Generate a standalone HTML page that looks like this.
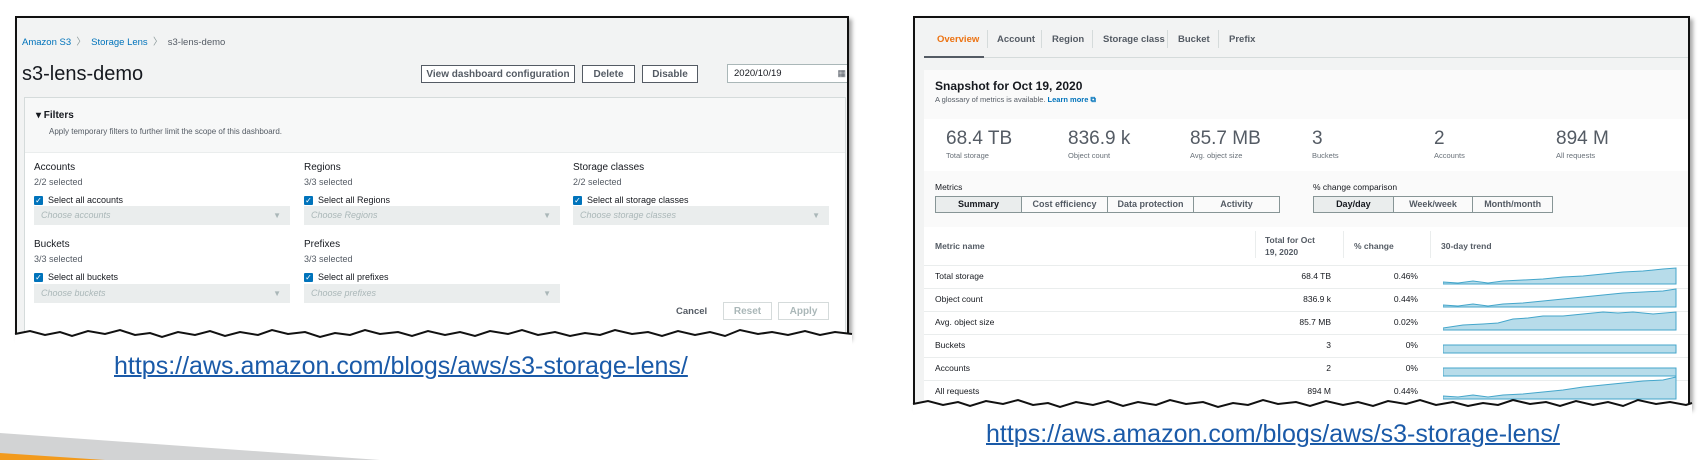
<!DOCTYPE html>
<html><head><meta charset="utf-8"><style>
*{box-sizing:border-box;margin:0;padding:0}
body{width:1708px;height:460px;background:#fff;position:relative;overflow:hidden;font-family:"Liberation Sans",sans-serif;color:#16191f}
.abs{position:absolute;white-space:nowrap}
.panel{position:absolute;border:2px solid #111;border-bottom:none;overflow:hidden;box-shadow:3px 3px 4px rgba(0,0,0,.35)}
.btn{position:absolute;border:1px solid #545b64;background:#fff;font-size:10px;font-weight:bold;color:#545b64;display:flex;align-items:center;justify-content:center}
.sel{position:absolute;height:19px;background:#eaeded;font-size:9px;font-style:italic;color:#aab7b8;padding-left:7px;line-height:19px}
.sel:after{content:"▼";position:absolute;right:9px;top:0;font-style:normal;font-size:8px;color:#aab7b8}
.cb{position:absolute;width:9px;height:9px;background:#0073bb;border-radius:1px;color:#fff;font-size:8px;line-height:9px;text-align:center}
.s9{font-size:9px;color:#16191f}
.link{position:absolute;font-family:"Liberation Sans Narrow","Liberation Sans",sans-serif;font-size:25px;color:#1a5aa8;text-decoration:underline;text-decoration-thickness:2px;white-space:nowrap}
.seg{position:absolute;height:17px;border:1px solid #879596;display:flex;font-size:9px;font-weight:bold;color:#545b64}
.seg div{flex:1;text-align:center;line-height:15px;border-left:1px solid #879596}
.seg div:first-child{border-left:none;background:#eaeded;color:#16191f}
.row{position:absolute;left:924px;width:764px;height:23px;border-top:1px solid #eaeded;font-size:9px}
</style></head><body>

<!-- LEFT PANEL -->
<div class="panel" style="left:15px;top:16px;width:834px;height:322px;background:#f2f3f3">
  <div class="abs" style="left:5px;top:16px;font-size:9.5px;color:#0073bb">Amazon S3 <span style="color:#879596">&nbsp;〉&nbsp;</span> Storage Lens <span style="color:#879596">&nbsp;〉&nbsp;</span> <span style="color:#545b64">s3-lens-demo</span></div>
  <div class="abs" style="left:5px;top:45px;font-size:20px;color:#16191f">s3-lens-demo</div>
  <div class="btn" style="left:404px;top:47px;width:154px;height:18px">View dashboard configuration</div>
  <div class="btn" style="left:565px;top:47px;width:53px;height:18px">Delete</div>
  <div class="btn" style="left:625px;top:47px;width:56px;height:18px">Disable</div>
  <div class="abs" style="left:710px;top:46px;width:124px;height:19px;border:1px solid #aab7b8;background:#fff;font-size:9.5px;padding-left:6px;line-height:17px">2020/10/19<span style="position:absolute;right:4px;top:0;font-size:9px;color:#545b64">▦</span></div>
  <div style="position:absolute;left:7px;top:79px;width:822px;height:250px;background:#fff;border:1px solid #d5dbdb">
    <div style="position:absolute;left:0;top:0;width:100%;height:55px;background:#f7f8f8;border-bottom:1px solid #eaeded"></div>
    <div class="abs" style="left:11px;top:12px;font-size:10px;font-weight:bold">▾ Filters</div>
    <div class="abs" style="left:24px;top:29px;font-size:8px;color:#545b64">Apply temporary filters to further limit the scope of this dashboard.</div>
  </div>
</div>
<div class="abs s9" style="left:34px;top:162px;font-size:10px">Accounts</div>
<div class="abs s9" style="left:34px;top:177px;color:#545b64">2/2 selected</div>
<div class="cb" style="left:34px;top:196px">✓</div><div class="abs s9" style="left:48px;top:195px">Select all accounts</div>
<div class="sel" style="left:34px;top:206px;width:256px">Choose accounts</div>

<div class="abs s9" style="left:304px;top:162px;font-size:10px">Regions</div>
<div class="abs s9" style="left:304px;top:177px;color:#545b64">3/3 selected</div>
<div class="cb" style="left:304px;top:196px">✓</div><div class="abs s9" style="left:318px;top:195px">Select all Regions</div>
<div class="sel" style="left:304px;top:206px;width:256px">Choose Regions</div>

<div class="abs s9" style="left:573px;top:162px;font-size:10px">Storage classes</div>
<div class="abs s9" style="left:573px;top:177px;color:#545b64">2/2 selected</div>
<div class="cb" style="left:573px;top:196px">✓</div><div class="abs s9" style="left:587px;top:195px">Select all storage classes</div>
<div class="sel" style="left:573px;top:206px;width:256px">Choose storage classes</div>

<div class="abs s9" style="left:34px;top:239px;font-size:10px">Buckets</div>
<div class="abs s9" style="left:34px;top:254px;color:#545b64">3/3 selected</div>
<div class="cb" style="left:34px;top:273px">✓</div><div class="abs s9" style="left:48px;top:272px">Select all buckets</div>
<div class="sel" style="left:34px;top:284px;width:256px">Choose buckets</div>

<div class="abs s9" style="left:304px;top:239px;font-size:10px">Prefixes</div>
<div class="abs s9" style="left:304px;top:254px;color:#545b64">3/3 selected</div>
<div class="cb" style="left:304px;top:273px">✓</div><div class="abs s9" style="left:318px;top:272px">Select all prefixes</div>
<div class="sel" style="left:304px;top:284px;width:256px">Choose prefixes</div>

<div class="abs" style="left:676px;top:306px;font-size:9.5px;font-weight:bold;color:#545b64">Cancel</div>
<div class="btn" style="left:723px;top:302px;width:49px;height:18px;border-color:#d5dbdb;color:#aab7b8">Reset</div>
<div class="btn" style="left:778px;top:302px;width:51px;height:18px;border-color:#d5dbdb;color:#aab7b8">Apply</div>

<svg class="abs" style="left:10px;top:326px" width="850" height="24"><path d="M5 8 L20 5 L35 9 L50 6 L62 10 L78 5 L95 8 L110 4 L125 9 L140 7 L152 11 L168 6 L185 9 L200 5 L215 10 L230 6 L248 9 L262 4 L278 8 L295 6 L310 11 L325 7 L340 9 L355 4 L370 8 L388 6 L402 10 L418 5 L435 9 L450 6 L465 10 L480 5 L498 8 L512 4 L528 9 L545 6 L560 10 L575 7 L590 9 L605 4 L622 8 L638 6 L652 10 L668 5 L685 9 L700 6 L715 10 L730 4 L748 8 L762 6 L778 9 L795 5 L810 9 L825 6 L842 8 L842 24 L5 24 Z" fill="#fff"/><path d="M5 8 L20 5 L35 9 L50 6 L62 10 L78 5 L95 8 L110 4 L125 9 L140 7 L152 11 L168 6 L185 9 L200 5 L215 10 L230 6 L248 9 L262 4 L278 8 L295 6 L310 11 L325 7 L340 9 L355 4 L370 8 L388 6 L402 10 L418 5 L435 9 L450 6 L465 10 L480 5 L498 8 L512 4 L528 9 L545 6 L560 10 L575 7 L590 9 L605 4 L622 8 L638 6 L652 10 L668 5 L685 9 L700 6 L715 10 L730 4 L748 8 L762 6 L778 9 L795 5 L810 9 L825 6 L842 8" fill="none" stroke="#111" stroke-width="2"/></svg>
<div class="link" style="left:114px;top:352px">https://aws.amazon.com/blogs/aws/s3-storage-lens/</div>

<!-- RIGHT PANEL -->
<div class="panel" style="left:913px;top:16px;width:777px;height:392px;background:#f2f3f3">
  <div class="abs" style="left:22px;top:16px;font-size:9.5px;font-weight:bold;color:#ec7211">Overview</div>
  <div class="abs" style="left:82px;top:16px;font-size:9.5px;font-weight:bold;color:#545b64">Account</div>
  <div class="abs" style="left:137px;top:16px;font-size:9.5px;font-weight:bold;color:#545b64">Region</div>
  <div class="abs" style="left:188px;top:16px;font-size:9.5px;font-weight:bold;color:#545b64">Storage class</div>
  <div class="abs" style="left:263px;top:16px;font-size:9.5px;font-weight:bold;color:#545b64">Bucket</div>
  <div class="abs" style="left:314px;top:16px;font-size:9.5px;font-weight:bold;color:#545b64">Prefix</div>
  <div class="abs" style="left:72px;top:12px;width:1px;height:18px;background:#d5dbdb"></div>
  <div class="abs" style="left:126px;top:12px;width:1px;height:18px;background:#d5dbdb"></div>
  <div class="abs" style="left:177px;top:12px;width:1px;height:18px;background:#d5dbdb"></div>
  <div class="abs" style="left:252px;top:12px;width:1px;height:18px;background:#d5dbdb"></div>
  <div class="abs" style="left:303px;top:12px;width:1px;height:18px;background:#d5dbdb"></div>
  <div class="abs" style="left:9px;top:39px;width:770px;height:1px;background:#d5dbdb"></div>
  <div class="abs" style="left:9px;top:38px;width:60px;height:2px;background:#545b64"></div>
  <div class="abs" style="left:9px;top:52px;width:770px;height:340px;background:#fafafa"></div>
  <div class="abs" style="left:9px;top:101px;width:770px;height:52px;background:#fff"></div>
  <div class="abs" style="left:9px;top:209px;width:770px;height:190px;background:#fff"></div>
</div>
<div class="abs" style="left:935px;top:79px;font-size:12px;font-weight:bold">Snapshot for Oct 19, 2020</div>
<div class="abs" style="left:935px;top:95px;font-size:7.5px;color:#545b64">A glossary of metrics is available. <b style="color:#0073bb">Learn more ⧉</b></div>

<div class="abs" style="left:946px;top:128px;font-size:19px;color:#545b64">68.4 TB</div><div class="abs" style="left:946px;top:151px;font-size:7.5px;color:#687078">Total storage</div>
<div class="abs" style="left:1068px;top:128px;font-size:19px;color:#545b64">836.9 k</div><div class="abs" style="left:1068px;top:151px;font-size:7.5px;color:#687078">Object count</div>
<div class="abs" style="left:1190px;top:128px;font-size:19px;color:#545b64">85.7 MB</div><div class="abs" style="left:1190px;top:151px;font-size:7.5px;color:#687078">Avg. object size</div>
<div class="abs" style="left:1312px;top:128px;font-size:19px;color:#545b64">3</div><div class="abs" style="left:1312px;top:151px;font-size:7.5px;color:#687078">Buckets</div>
<div class="abs" style="left:1434px;top:128px;font-size:19px;color:#545b64">2</div><div class="abs" style="left:1434px;top:151px;font-size:7.5px;color:#687078">Accounts</div>
<div class="abs" style="left:1556px;top:128px;font-size:19px;color:#545b64">894 M</div><div class="abs" style="left:1556px;top:151px;font-size:7.5px;color:#687078">All requests</div>

<div class="abs" style="left:935px;top:182px;font-size:8.5px">Metrics</div>
<div class="seg" style="left:935px;top:196px;width:345px"><div>Summary</div><div>Cost efficiency</div><div>Data protection</div><div>Activity</div></div>
<div class="abs" style="left:1313px;top:182px;font-size:8.5px">% change comparison</div>
<div class="seg" style="left:1313px;top:196px;width:240px"><div>Day/day</div><div>Week/week</div><div>Month/month</div></div>

<div class="abs" style="left:935px;top:241px;font-size:8.5px;font-weight:bold;color:#545b64">Metric name</div>
<div class="abs" style="left:1265px;top:234px;font-size:8.5px;font-weight:bold;color:#545b64;line-height:12px">Total for Oct<br>19, 2020</div>
<div class="abs" style="left:1354px;top:241px;font-size:8.5px;font-weight:bold;color:#545b64">% change</div>
<div class="abs" style="left:1441px;top:241px;font-size:8.5px;font-weight:bold;color:#545b64">30-day trend</div>
<div class="abs" style="left:1255px;top:231px;width:1px;height:27px;background:#eaeded"></div>
<div class="abs" style="left:1343px;top:231px;width:1px;height:27px;background:#eaeded"></div>
<div class="abs" style="left:1430px;top:231px;width:1px;height:27px;background:#eaeded"></div>

<div class="row" style="top:265px"></div><div class="row" style="top:288px"></div><div class="row" style="top:311px"></div><div class="row" style="top:334px"></div><div class="row" style="top:357px"></div><div class="row" style="top:380px"></div>
<div class="abs" style="left:935px;top:265px;font-size:8.5px;line-height:23px">Total storage<br>Object count<br>Avg. object size<br>Buckets<br>Accounts<br>All requests</div>
<div class="abs" style="left:1231px;width:100px;text-align:right;top:265px;font-size:8.5px;line-height:23px">68.4 TB<br>836.9 k<br>85.7 MB<br>3<br>2<br>894 M</div>
<div class="abs" style="left:1318px;width:100px;text-align:right;top:265px;font-size:8.5px;line-height:23px">0.46%<br>0.44%<br>0.02%<br>0%<br>0%<br>0.44%</div>
<svg class="abs" style="left:1443px;top:266px" width="235" height="140">
<g fill="#b7dcea" stroke="#44a6cb" stroke-width="1">
<path d="M0 16 L15 17 L30 15 L45 17 L60 15 L80 14 L100 13 L120 11 L140 10 L160 8 L180 6 L200 5 L220 3 L233 2 L233 18 L0 18Z"/>
<path d="M0 39 L15 40 L30 38 L45 40 L60 38 L80 37 L100 35 L120 33 L140 31 L160 29 L180 27 L200 26 L220 25 L233 23 L233 41 L0 41Z"/>
<path d="M0 62 L20 59 L40 58 L55 57 L70 53 L85 52 L100 50 L120 50 L140 48 L160 46 L175 47 L190 46 L210 48 L233 46 L233 64 L0 64Z"/>
<path d="M0 79 L233 79 L233 87 L0 87Z"/>
<path d="M0 102 L233 102 L233 110 L0 110Z"/>
<path d="M0 130 L15 131 L30 129 L45 131 L60 129 L80 128 L100 126 L120 124 L140 121 L160 119 L180 117 L200 115 L220 114 L233 111 L233 133 L0 133Z"/>
</g></svg>

<svg class="abs" style="left:908px;top:396px" width="790" height="24"><path d="M5 8 L20 5 L35 9 L50 6 L62 10 L78 5 L95 8 L110 4 L125 9 L140 7 L152 11 L168 6 L185 9 L200 5 L215 10 L230 6 L248 9 L262 4 L278 8 L295 6 L310 11 L325 7 L340 9 L355 4 L370 8 L388 6 L402 10 L418 5 L435 9 L450 6 L465 10 L480 5 L498 8 L512 4 L528 9 L545 6 L560 10 L575 7 L590 9 L605 4 L622 8 L638 6 L652 10 L668 5 L685 9 L700 6 L715 10 L730 4 L748 8 L762 6 L778 9 L784 7 L784 24 L5 24 Z" fill="#fff"/><path d="M5 8 L20 5 L35 9 L50 6 L62 10 L78 5 L95 8 L110 4 L125 9 L140 7 L152 11 L168 6 L185 9 L200 5 L215 10 L230 6 L248 9 L262 4 L278 8 L295 6 L310 11 L325 7 L340 9 L355 4 L370 8 L388 6 L402 10 L418 5 L435 9 L450 6 L465 10 L480 5 L498 8 L512 4 L528 9 L545 6 L560 10 L575 7 L590 9 L605 4 L622 8 L638 6 L652 10 L668 5 L685 9 L700 6 L715 10 L730 4 L748 8 L762 6 L778 9 L784 7" fill="none" stroke="#111" stroke-width="2"/></svg>
<div class="link" style="left:986px;top:420px">https://aws.amazon.com/blogs/aws/s3-storage-lens/</div>

<svg class="abs" style="left:0;top:430px" width="420" height="30"><path d="M0 3 L380 30 L0 30Z" fill="#d2d3d4"/><path d="M0 23 L105 30 L0 30Z" fill="#f29a1d"/></svg>
</body></html>
